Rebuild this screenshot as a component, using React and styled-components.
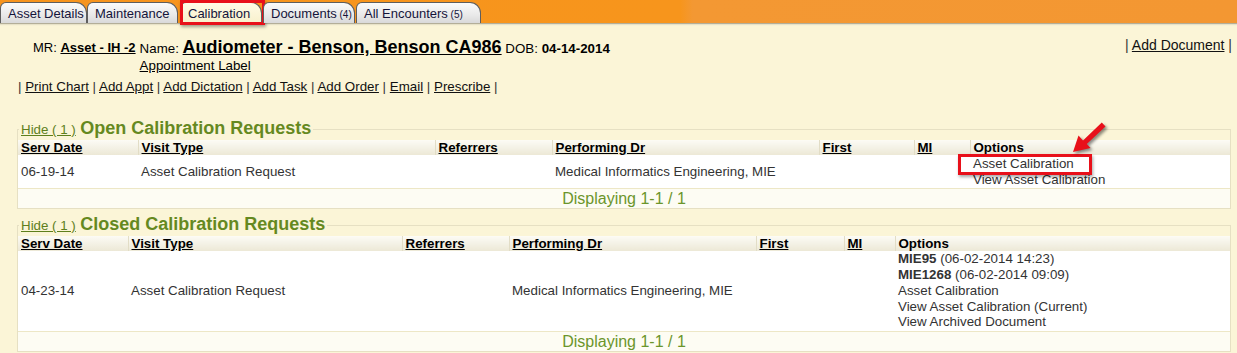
import React from "react";
import styled, { createGlobalStyle } from "styled-components";

const GlobalStyle = createGlobalStyle`
    body {
        margin: 0;
        background: #fbf5d7;
        font-family: "Liberation Sans", Arial, sans-serif;
        color: #000;
    }
`;

const TopBar = styled.div`
    height: 23px;
    display: flex;
    align-items: flex-end;
    background: linear-gradient(90deg, #f7941d 0%, #f7951c 55%, #f39833 56%, #f39732 100%);
    border-bottom: 1px solid #b3ae98;
    box-shadow: 0 1px 1px #e7e2c8;
`;

const Tab = styled.div`
    position: relative;
    height: 21px;
    width: ${({ $w }) => $w}px;
    margin-left: ${({ $gap }) => $gap}px;
    box-sizing: border-box;
    padding-left: 7px;
    line-height: 22px;
    font-size: 13px;
    color: #14143a;
    white-space: nowrap;
    border: 1px solid #5e5e5e;
    border-bottom: none;
    border-radius: 6px 11px 0 0;
    background: ${({ $active }) =>
        $active
            ? "linear-gradient(#fffbe6, #f8f0cc)"
            : "linear-gradient(#fbfbfb, #e9e9e9 60%, #d9d9d9)"};
    small {
        font-size: 10px;
    }
    &::after {
        content: "";
        display: ${({ $marked }) => ($marked ? "block" : "none")};
        position: absolute;
        left: -1px;
        top: -3px;
        right: -4px;
        bottom: -2px;
        border: 3px solid #e8101a;
        box-shadow: 1px 2px 3px rgba(0, 0, 0, 0.35);
    }
`;

const Header = styled.div`
    display: flex;
    justify-content: space-between;
    padding: 13px 5px 0 18px;
`;

const PatientBlock = styled.div`
    display: flex;
    flex-direction: column;
`;

const PatientRow = styled.div`
    display: flex;
    gap: 4px;
    padding-left: 15px;
    font-size: 13.33px;
`;

const MrCell = styled.div`
    padding-top: 3px;
    font-size: 13px;
    b {
        text-decoration: underline;
    }
`;

const NameCell = styled.div`
    line-height: 21px;
    .big {
        font-size: 18px;
        font-weight: bold;
        text-decoration: underline;
    }
    .label {
        display: block;
        line-height: 14px;
        text-decoration: underline;
    }
`;

const LinkRow = styled.div`
    margin-top: ${({ $top }) => ($top === undefined ? 6 : $top)}px;
    font-size: ${({ $size }) => $size || 13.33}px;
    color: #333;
    a {
        color: #111;
        text-decoration: underline;
    }
`;

const Sections = styled.div`
    padding: 24px 6px 0 17px;
    display: flex;
    flex-direction: column;
    gap: 5px;
`;

const Box = styled.fieldset`
    margin: 0;
    padding: 0;
    border: 1px solid #e6e0c3;
    min-width: 0;
    legend {
        padding: 0 2px;
        margin-left: 1px;
        white-space: nowrap;
        line-height: 21px;
    }
`;

const HideLink = styled.a`
    font-size: 13.33px;
    color: #5e7f1c;
    text-decoration: underline;
`;

const BoxTitle = styled.span`
    font-size: 18px;
    font-weight: bold;
    color: #65891f;
`;

const Grid = styled.table`
    width: 100%;
    border-collapse: collapse;
    table-layout: fixed;
    font-size: 13.33px;
    th {
        text-align: left;
        font-weight: bold;
        text-decoration: underline;
        padding: 0 3px;
        height: 15px;
        line-height: 15px;
        background: linear-gradient(#fcfbf5, #ece8d6);
        border-left: 1px solid #e2ddc6;
        white-space: nowrap;
    }
    th:first-child {
        border-left: none;
    }
    th.plain {
        text-decoration: none;
    }
    td {
        background: #fff;
        color: #333;
        padding: 0 3px;
        vertical-align: middle;
        white-space: nowrap;
    }
`;

const Footer = styled.td`
    && {
        background: #fdfcf3;
        border-top: 1px solid #ede7c6;
        text-align: center;
        font-size: 16px;
        color: #6b952b;
        height: 19px;
        line-height: 19px;
        padding: 0;
    }
`;

const OptionLine = styled.div`
    line-height: ${({ $lh }) => $lh || 15.8}px;
    b {
        font-weight: bold;
    }
`;

const Marked = styled.span`
    position: relative;
    display: inline-block;
    &::before {
        content: "";
        position: absolute;
        left: -15px;
        top: -1px;
        right: -18px;
        bottom: -3px;
        border: 3px solid #e8101a;
        box-shadow: 1px 2px 3px rgba(0, 0, 0, 0.35);
    }
`;

const Arrow = styled.svg`
    position: absolute;
    left: 98px;
    top: -34px;
    width: 36px;
    height: 34px;
    overflow: visible;
    filter: drop-shadow(2px 2px 1.5px rgba(0, 0, 0, 0.45));
`;

const tabs = [
    { label: "Asset Details", w: 87, gap: 0 },
    { label: "Maintenance", w: 91, gap: 0 },
    { label: "Calibration", w: 82, gap: 2, active: true },
    { label: "Documents", count: 4, w: 92, gap: 1 },
    { label: "All Encounters", count: 5, w: 125, gap: 1 },
];

const columns = ["Serv Date", "Visit Type", "Referrers", "Performing Dr", "First", "MI", "Options"];

const Section = ({ title, widths, row, options }) => (
    <Box>
        <legend>
            <HideLink>Hide ( 1 )</HideLink> <BoxTitle>{title}</BoxTitle>
        </legend>
        <Grid>
            <colgroup>
                {widths.map((w, i) => (
                    <col key={i} width={w} />
                ))}
            </colgroup>
            <tbody>
                <tr>
                    {columns.map((c) => (
                        <th key={c} className={c === "Options" ? "plain" : undefined}>
                            {c}
                        </th>
                    ))}
                </tr>
                <tr style={{ height: row.height }}>
                    <td>{row.date}</td>
                    <td>Asset Calibration Request</td>
                    <td></td>
                    <td>Medical Informatics Engineering, MIE</td>
                    <td></td>
                    <td></td>
                    <td>{options}</td>
                </tr>
                <tr>
                    <Footer colSpan={7}>Displaying 1-1 / 1</Footer>
                </tr>
            </tbody>
        </Grid>
    </Box>
);

const App = () => {
    return (
        <>
            <GlobalStyle />
            <TopBar>
                {tabs.map((t) => (
                    <Tab key={t.label} $w={t.w} $gap={t.gap} $active={t.active} $marked={t.active}>
                        {t.label}
                        {t.count && <small> ({t.count})</small>}
                    </Tab>
                ))}
            </TopBar>
            <Header>
                <PatientBlock>
                    <PatientRow>
                        <MrCell>
                            MR: <b>Asset - IH -2</b>
                        </MrCell>
                        <NameCell>
                            Name: <span className="big">Audiometer - Benson, Benson CA986</span> DOB:{" "}
                            <b>04-14-2014</b>
                            <span className="label">Appointment Label</span>
                        </NameCell>
                    </PatientRow>
                    <LinkRow>
                        | <a>Print Chart</a> | <a>Add Appt</a> | <a>Add Dictation</a> | <a>Add Task</a> |{" "}
                        <a>Add Order</a> | <a>Email</a> | <a>Prescribe</a> |
                    </LinkRow>
                </PatientBlock>
                <LinkRow $top={0} $size={14}>
                    | <a>Add Document</a> |
                </LinkRow>
            </Header>
            <Sections>
                <Section
                    title="Open Calibration Requests"
                    widths={[120, 297, 117, 267, 95, 56, 260]}
                    row={{ date: "06-19-14", height: 33 }}
                    options={
                        <>
                            <OptionLine $lh={17}>
                                <Marked>
                                    Asset Calibration
                                    <Arrow viewBox="0 0 36 34">
                                        <polygon
                                            points="2,31 19.5,27 15.8,23 34.5,5.5 30.8,1.5 12,19.5 7.5,14.5"
                                            fill="#e8101a"
                                        />
                                    </Arrow>
                                </Marked>
                            </OptionLine>
                            <OptionLine $lh={16}>View Asset Calibration</OptionLine>
                        </>
                    }
                />
                <Section
                    title="Closed Calibration Requests"
                    widths={[110, 274, 107, 247, 88, 51, 335]}
                    row={{ date: "04-23-14", height: 80 }}
                    options={
                        <>
                            <OptionLine>
                                <b>MIE95</b> (06-02-2014 14:23)
                            </OptionLine>
                            <OptionLine>
                                <b>MIE1268</b> (06-02-2014 09:09)
                            </OptionLine>
                            <OptionLine>Asset Calibration</OptionLine>
                            <OptionLine>View Asset Calibration (Current)</OptionLine>
                            <OptionLine>View Archived Document</OptionLine>
                        </>
                    }
                />
            </Sections>
        </>
    );
};

export default App;
